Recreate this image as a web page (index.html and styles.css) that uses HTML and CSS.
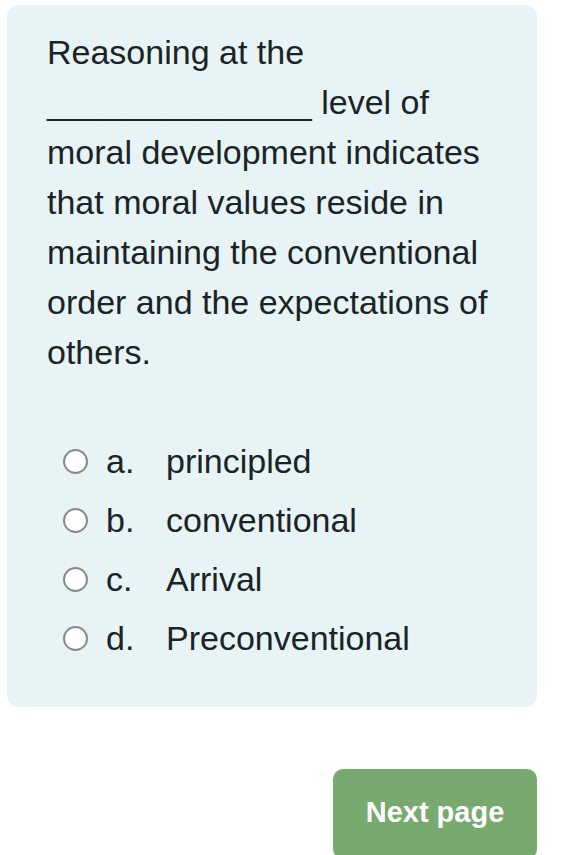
FILE: index.html
```html
<!DOCTYPE html>
<html>
<head>
<meta charset="utf-8">
<link rel="stylesheet" href="styles.css">
</head>
<body>
<div class="page">
  <div class="card">
    <div class="qtext">Reasoning at the ______________ level of moral development indicates that moral values reside in maintaining the conventional order and the expectations of others.</div>
    <div class="answers">
      <label class="opt"><span class="radio"></span><span class="letter">a.</span><span class="label">principled</span></label>
      <label class="opt"><span class="radio"></span><span class="letter">b.</span><span class="label">conventional</span></label>
      <label class="opt"><span class="radio"></span><span class="letter">c.</span><span class="label">Arrival</span></label>
      <label class="opt"><span class="radio"></span><span class="letter">d.</span><span class="label">Preconventional</span></label>
    </div>
  </div>
  <div class="nav">
    <button class="next">Next page</button>
  </div>
</div>
</body>
</html>
```
FILE: styles.css
```css
html, body {
  margin: 0;
  padding: 0;
  background: #fff;
}
body {
  font-family: "Liberation Sans", Arial, sans-serif;
  color: #1a2427;
  overflow: hidden;
}
.page {
  padding: 5px 27px 0 7px;
}
.card {
  background: #e7f3f5;
  border-radius: 12px;
  padding: 22px 40px 39px 40px;
}
.qtext {
  font-size: 34px;
  line-height: 50px;
}
.answers {
  margin-top: 55px;
  display: flex;
  flex-direction: column;
}
.opt {
  display: flex;
  align-items: center;
  height: 59px;
  font-size: 34px;
  padding-left: 16px;
}
.radio {
  width: 21px;
  height: 21px;
  border: 2.5px solid #8a8a8a;
  border-radius: 50%;
  background: #fff;
  flex: none;
  margin-right: 18px;
}
.letter {
  width: 60px;
}
.nav {
  display: flex;
  justify-content: flex-end;
  margin-top: 62px;
}
.next {
  background: #78aa70;
  color: #fff;
  border: none;
  border-radius: 10px;
  font-family: "Liberation Sans", Arial, sans-serif;
  font-weight: bold;
  font-size: 29px;
  width: 204px;
  height: 90px;
  padding: 0 0 4px 0;
}
```
